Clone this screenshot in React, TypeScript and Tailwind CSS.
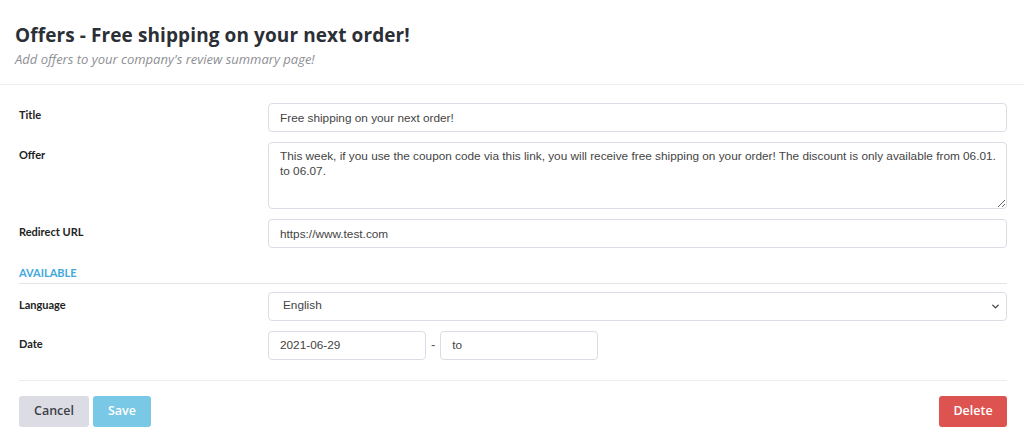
import { ChevronDown } from "lucide-react";

const input =
  "h-[29px] w-full rounded-[4px] border border-[#dcdde4] bg-white px-[11px] text-[11.8px] text-[#444] outline-none";

function Label({ children }: { children: React.ReactNode }) {
  return <div className="pt-[5px] text-[11px] font-bold text-[#222] font-['Lato',sans-serif]">{children}</div>;
}

export default function App() {
  return (
    <div className="h-[438px] w-[1024px] bg-white font-['Liberation_Sans',Arial,sans-serif]">
      <div className="border-b border-[#ececef] px-[15px] pt-[22px] pb-[16px]">
        <h1 className="text-[19px] font-bold leading-[26px] text-[#2b2f36] font-['Open_Sans',sans-serif] tracking-[0.1px]">
          Offers - Free shipping on your next order!
        </h1>
        <p className="mt-[2px] text-[13px] italic leading-[18px] text-[#8d8f94] font-['Open_Sans',sans-serif]">
          Add offers to your company's review summary page!
        </p>
      </div>

      <div className="pl-[19px] pr-[17px] pt-[17px]">
        <div className="grid grid-cols-[249px_1fr] gap-y-[10px]">
          <Label>Title</Label>
          <input className={input + " mt-[1px]"} defaultValue="Free shipping on your next order!" />

          <Label>Offer</Label>
          <textarea
            className="h-[67px] w-full resize-y rounded-[4px] border border-[#dcdde4] bg-white pl-[11px] pr-[4px] pt-[6px] text-[11.8px] leading-[15px] text-[#444] outline-none"
            defaultValue="This week, if you use the coupon code via this link, you will receive free shipping on your order! The discount is only available from 06.01. to 06.07."
          />

          <Label>Redirect URL</Label>
          <input className={input} defaultValue="https://www.test.com" />
        </div>

        <div className="mt-[17px] border-b border-[#e3e4ea] pb-[1px] text-[11px] font-bold text-[#3fa8dc] font-['Lato',sans-serif]">
          AVAILABLE
        </div>

        <div className="mt-[8px] grid grid-cols-[249px_1fr] gap-y-[10px]">
          <Label>Language</Label>
          <div className="relative">
            <div className={input + " flex items-center pl-[14px]"}>English</div>
            <ChevronDown className="absolute right-[6px] top-[9px] h-[11px] w-[11px] text-[#444]" strokeWidth={3} />
          </div>

          <Label>Date</Label>
          <div className="flex items-center">
            <input className={input + " !w-[158px]"} defaultValue="2021-06-29" />
            <span className="mx-[5px] text-[13px] text-[#555]">-</span>
            <input className={input + " !w-[158px]"} defaultValue="to" />
          </div>
        </div>

        <div className="mt-[20px] border-t border-[#ececef] pt-[15px]">
          <div className="flex items-center font-['Open_Sans',sans-serif] text-[12.5px] font-semibold">
            <button className="h-[31px] w-[70px] rounded-[3px] bg-[#dcdde4] text-[#3d3f46]">Cancel</button>
            <button className="ml-[4px] h-[31px] w-[58px] rounded-[3px] bg-[#78c8e6] text-white">Save</button>
            <button className="ml-auto h-[31px] w-[68px] rounded-[3px] bg-[#dc5350] text-white">Delete</button>
          </div>
        </div>
      </div>
    </div>
  );
}
